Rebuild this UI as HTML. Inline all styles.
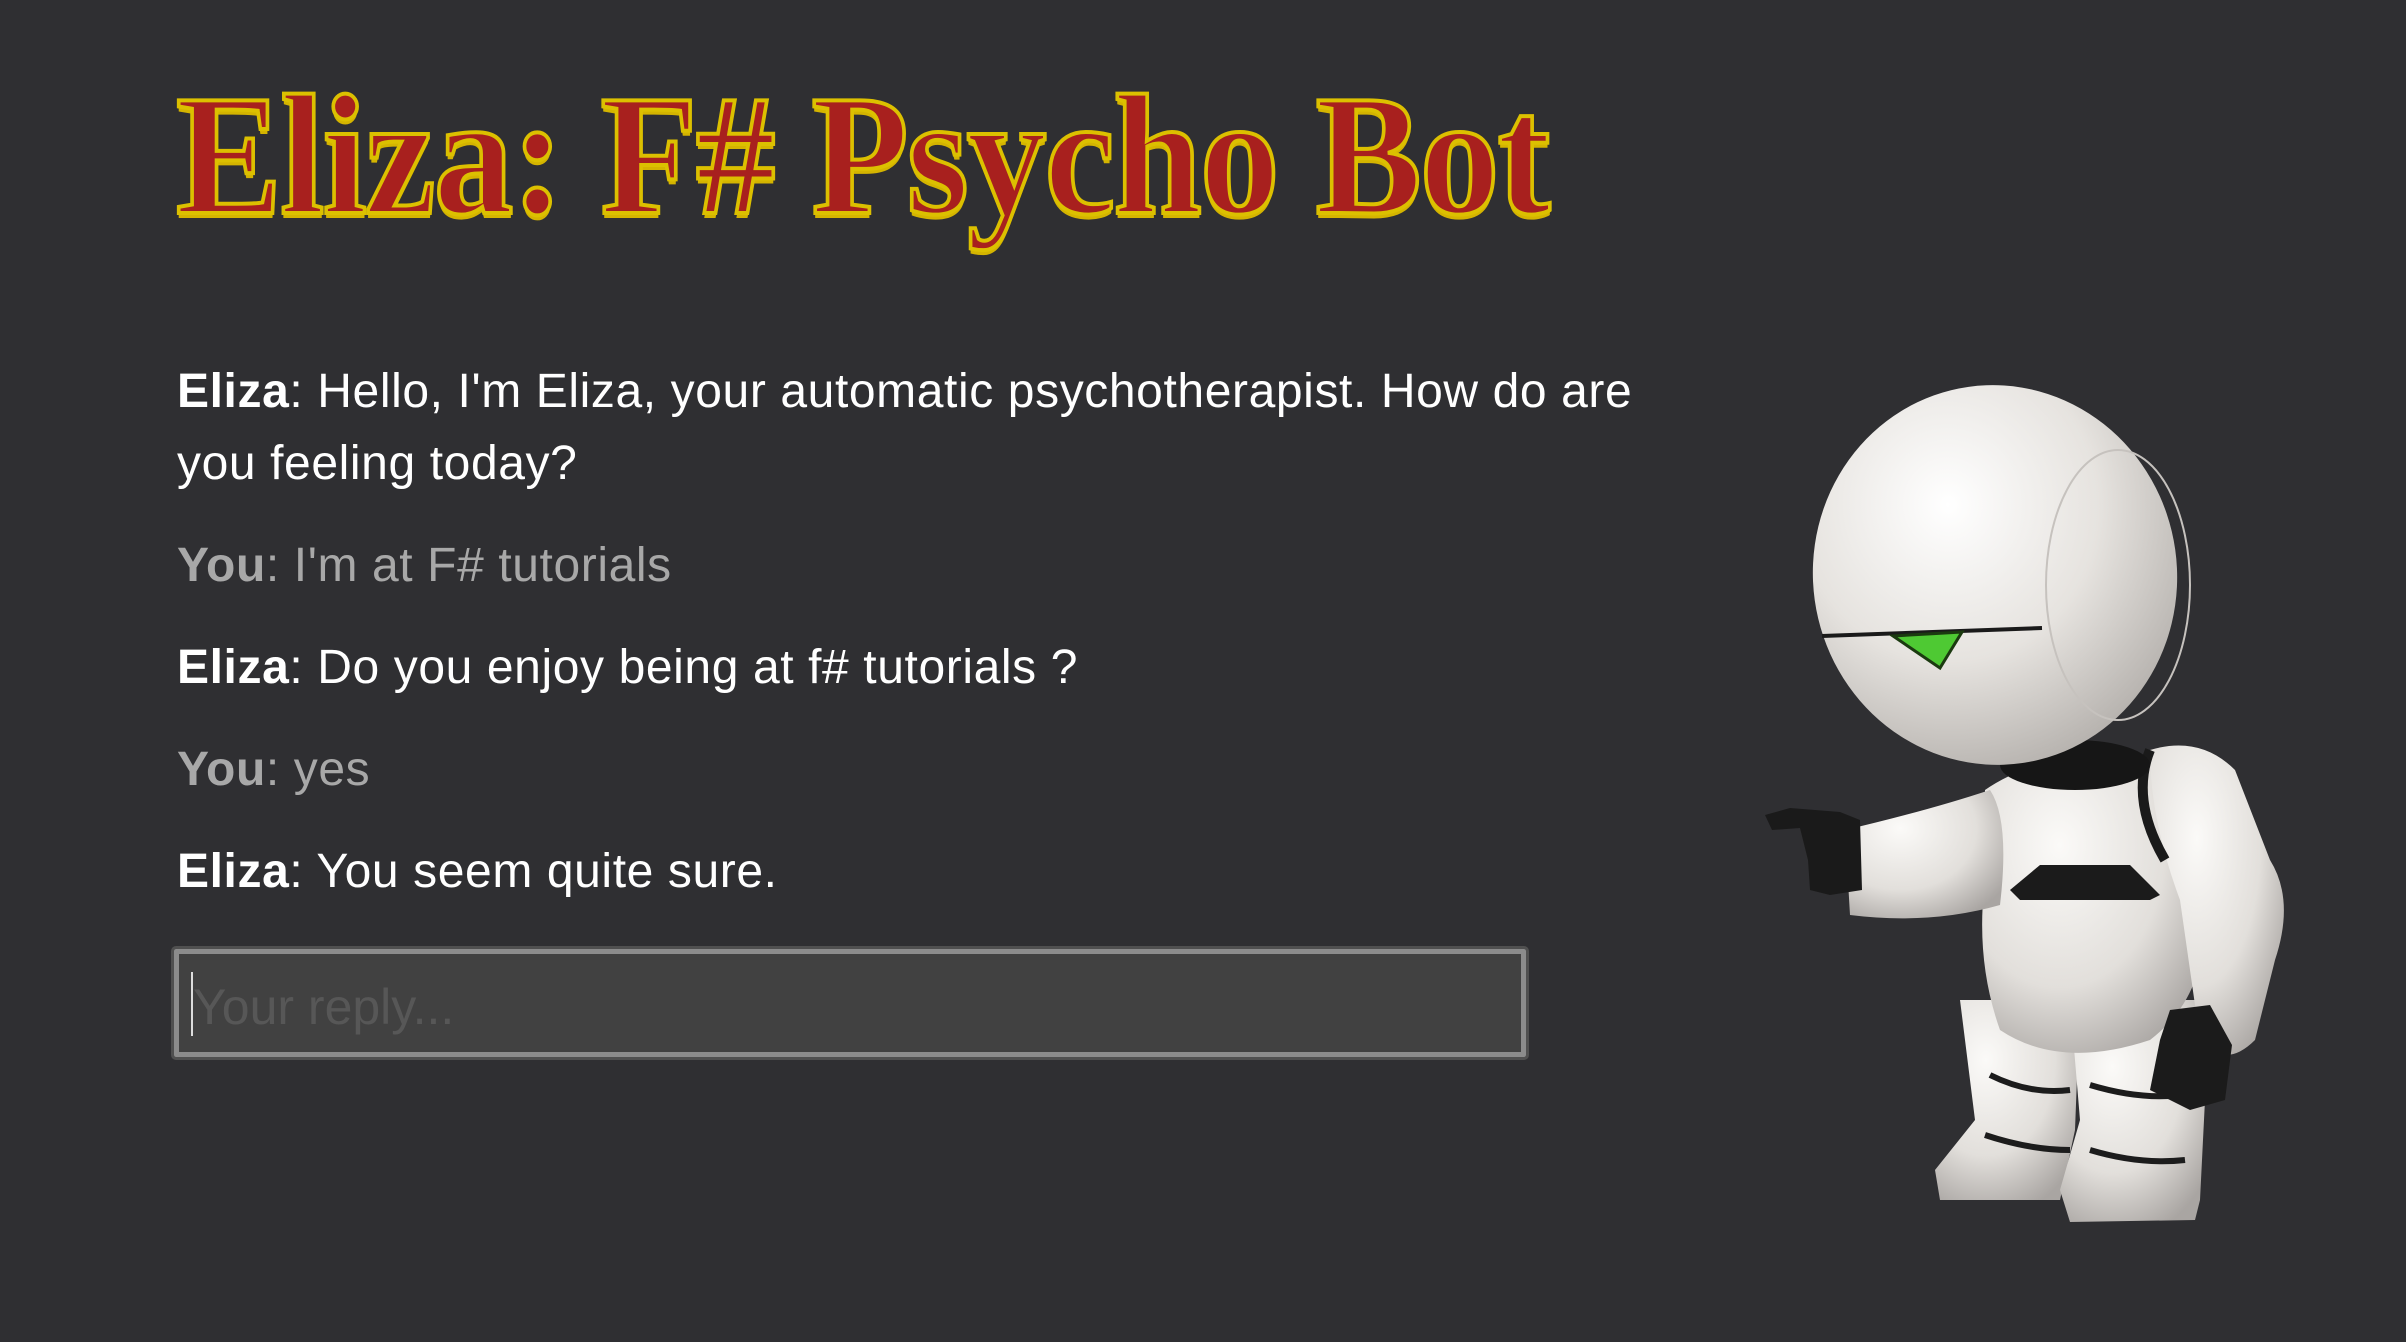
<!DOCTYPE html>
<html><head><meta charset="utf-8"><style>
html,body{margin:0;padding:0;background:#2f2f32;width:2406px;height:1342px;overflow:hidden}
h1{position:absolute;left:176px;top:70px;margin:0;font-family:"Liberation Serif",serif;font-weight:bold;font-size:172px;line-height:1;color:#a8201e;-webkit-text-stroke:4px #dcc000;letter-spacing:-2px;text-shadow:0 5px 0 #d4b400;transform:scaleX(0.925);transform-origin:left top;white-space:nowrap}
.chat{position:absolute;left:177px;top:356px;width:1530px;font-family:"Liberation Sans",sans-serif;font-size:48px;line-height:72px;letter-spacing:0.6px}
.chat p{margin:0 0 30px 0}
.e{color:#fff}.y{color:#a8a8a8}
.inp{position:absolute;left:174px;top:949px;width:1352px;height:108px;box-sizing:border-box;border:5px solid #8c8c8c;outline:3px solid #505050;background:#414141;border-radius:2px}
.ph{position:absolute;left:14px;top:24px;font-family:"Liberation Sans",sans-serif;font-size:50px;color:#575757}
.cur{position:absolute;left:12px;top:18px;width:2px;height:64px;background:#ddd}
svg{position:absolute;left:0;top:0}
</style></head><body>
<h1>Eliza: F# Psycho Bot</h1>
<div class="chat">
<p class="e"><b>Eliza</b>: Hello, I'm Eliza, your automatic psychotherapist. How do are you feeling today?</p>
<p class="y"><b>You</b>: I'm at F# tutorials</p>
<p class="e"><b>Eliza</b>: Do you enjoy being at f# tutorials ?</p>
<p class="y"><b>You</b>: yes</p>
<p class="e"><b>Eliza</b>: You seem quite sure.</p>
</div>
<div class="inp"><div class="cur"></div><div class="ph">Your reply...</div></div>
<svg width="2406" height="1342" viewBox="0 0 2406 1342">
<defs>
<radialGradient id="g" cx="0.35" cy="0.3" r="0.8"><stop offset="0" stop-color="#fbfaf8"/><stop offset="0.6" stop-color="#e2dfdb"/><stop offset="1" stop-color="#a9a5a2"/></radialGradient>
<radialGradient id="h" cx="0.4" cy="0.3" r="0.75"><stop offset="0" stop-color="#ffffff"/><stop offset="0.55" stop-color="#e6e3df"/><stop offset="1" stop-color="#b3afab"/></radialGradient>
</defs>
<path d="M1960 1000 L2080 1000 L2075 1130 L2060 1200 L1940 1200 L1935 1170 L1975 1120 Z" fill="url(#g)"/>
<path d="M2070 1000 L2210 1000 L2200 1200 L2195 1220 L2070 1222 L2060 1190 L2080 1120 Z" fill="url(#g)"/>
<path d="M1990 1075 Q2030 1095 2070 1090" stroke="#1c1c1c" stroke-width="6" fill="none"/>
<path d="M1985 1135 Q2030 1150 2070 1150" stroke="#1c1c1c" stroke-width="6" fill="none"/>
<path d="M2090 1085 Q2140 1100 2180 1095" stroke="#1c1c1c" stroke-width="6" fill="none"/>
<path d="M2090 1150 Q2140 1165 2185 1160" stroke="#1c1c1c" stroke-width="6" fill="none"/>
<path d="M1985 790 Q2050 745 2160 760 L2200 900 Q2215 990 2150 1040 Q2060 1070 2000 1030 Q1975 960 1985 880 Z" fill="url(#g)"/>
<path d="M2010 890 L2040 865 L2130 865 L2160 895 L2150 900 L2020 900 Z" fill="#1b1b1b"/>
<path d="M1990 790 Q2010 820 2000 905 Q1930 925 1850 915 L1845 830 Q1930 810 1990 790 Z" fill="url(#g)"/>
<path d="M1860 820 L1840 812 L1790 808 L1765 815 L1772 830 L1800 828 L1808 860 L1810 890 L1830 895 L1862 890 Z" fill="#1a1a1a"/>
<path d="M2150 750 Q2200 735 2235 770 L2270 860 Q2295 900 2275 960 L2255 1040 Q2225 1070 2200 1040 L2180 900 Q2150 820 2150 750 Z" fill="url(#g)"/>
<path d="M2150 750 Q2130 800 2165 860" stroke="#1a1a1a" stroke-width="10" fill="none"/>
<path d="M2170 1010 L2210 1005 L2232 1045 L2225 1100 L2190 1110 L2150 1090 L2160 1040 Z" fill="#1b1b1b"/>
<ellipse cx="2075" cy="765" rx="75" ry="25" fill="#161616"/>
<ellipse cx="1995" cy="575" rx="182" ry="190" fill="url(#h)" transform="rotate(-8 1995 575)"/>
<ellipse cx="2118" cy="585" rx="72" ry="135" fill="none" stroke="#c6c2be" stroke-width="2"/>
<path d="M1822 636 L2042 628" stroke="#1a1a1a" stroke-width="4"/>
<path d="M1893 636 L1962 632 L1940 668 Z" fill="#4ec933" stroke="#1b3a10" stroke-width="3"/>
</svg>
</body></html>
